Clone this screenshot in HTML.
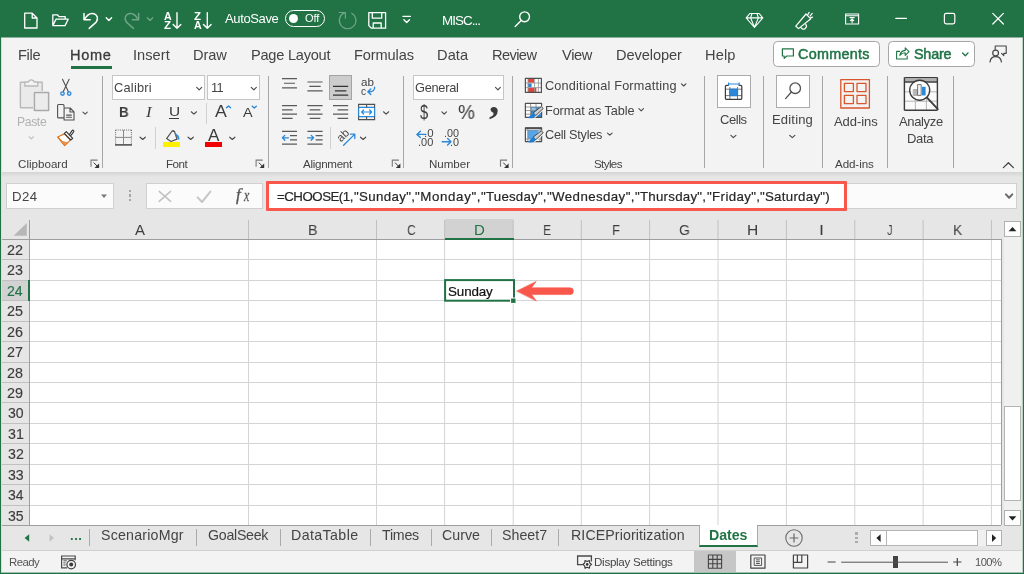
<!DOCTYPE html>
<html lang="en"><head><meta charset="utf-8"><title>Excel - CHOOSE</title>
<style>
html,body{margin:0;padding:0;}
body{width:1024px;height:574px;overflow:hidden;position:relative;background:#217346;font-family:"Liberation Sans",sans-serif;}
.b{position:absolute;}
.t{position:absolute;white-space:pre;will-change:transform;}
svg.ov{position:absolute;left:0;top:0;pointer-events:none;}
</style></head><body>
<div class="b " style="left:0px;top:0px;width:1024px;height:574px;background:#217346;"></div>
<div class="b " style="left:1px;top:37px;width:1022px;height:536px;background:#f3f3f3;"></div>
<div class="b " style="left:1px;top:37px;width:1022px;height:1px;background:#8ab39d;"></div>
<div class="b " style="left:1px;top:38px;width:1px;height:534px;background:#d4e0d9;"></div>
<div class="b " style="left:1px;top:572px;width:1022px;height:1px;background:#9fc0ae;"></div>
<div class="b " style="left:1022px;top:38px;width:1px;height:534px;background:#b9d0c3;"></div>
<div class="b " style="left:2px;top:38px;width:1020px;height:134px;background:#f3f3f3;"></div>
<div class="b " style="left:2px;top:172px;width:1020px;height:5px;background:linear-gradient(#d4d4d4,#e6e6e6);"></div>
<div class="b " style="left:2px;top:177px;width:1020px;height:373px;background:#e6e6e6;"></div>
<div class="b " style="left:2px;top:550px;width:1020px;height:22px;background:#f3f3f3;border-top:1px solid #d0d0d0;box-sizing:border-box;"></div>
<span class="t" style="left:163.73px;top:10px;font-size:10.6px;line-height:12px;color:#ffffff;transform:scaleX(1.0063);transform-origin:0 0;font-weight:700;">A</span>
<span class="t" style="left:164.11px;top:19px;font-size:10.6px;line-height:12px;color:#ffffff;transform:scaleX(1.0782);transform-origin:0 0;font-weight:700;">Z</span>
<span class="t" style="left:194.11px;top:10px;font-size:10.6px;line-height:12px;color:#ffffff;transform:scaleX(1.0782);transform-origin:0 0;font-weight:700;">Z</span>
<span class="t" style="left:193.73px;top:19px;font-size:10.6px;line-height:12px;color:#ffffff;transform:scaleX(1.0063);transform-origin:0 0;font-weight:700;">A</span>
<span class="t" style="left:224.80px;top:11px;font-size:13px;line-height:15px;color:#ffffff;letter-spacing:-0.376px;">AutoSave</span>
<div class="b " style="left:285px;top:9.8px;width:40.19999999999999px;height:17.0px;border:1.2px solid #fff;box-sizing:border-box;border-radius:9px;"></div>
<div class="b " style="left:289px;top:13.8px;width:9px;height:9.0px;background:#ffffff;border-radius:5px;"></div>
<span class="t" style="left:304.70px;top:12px;font-size:11px;line-height:12px;color:#ffffff;letter-spacing:-0.112px;">Off</span>
<span class="t" style="left:441.73px;top:13px;font-size:13.4px;line-height:15px;color:#ffffff;letter-spacing:-0.935px;">MISC...</span>
<span class="t" style="left:18.03px;top:47px;font-size:14.6px;line-height:16px;color:#444444;letter-spacing:-0.318px;">File</span>
<span class="t" style="left:133.29px;top:47px;font-size:14.6px;line-height:16px;color:#444444;letter-spacing:0.043px;">Insert</span>
<span class="t" style="left:193.03px;top:47px;font-size:14.6px;line-height:16px;color:#444444;letter-spacing:-0.108px;">Draw</span>
<span class="t" style="left:251.43px;top:47px;font-size:14.6px;line-height:16px;color:#444444;letter-spacing:-0.241px;">Page Layout</span>
<span class="t" style="left:354.23px;top:47px;font-size:14.6px;line-height:16px;color:#444444;letter-spacing:-0.115px;">Formulas</span>
<span class="t" style="left:436.83px;top:47px;font-size:14.6px;line-height:16px;color:#444444;letter-spacing:0.096px;">Data</span>
<span class="t" style="left:491.83px;top:47px;font-size:14.6px;line-height:16px;color:#444444;letter-spacing:-0.584px;">Review</span>
<span class="t" style="left:561.80px;top:47px;font-size:14.6px;line-height:16px;color:#444444;letter-spacing:-0.330px;">View</span>
<span class="t" style="left:615.63px;top:47px;font-size:14.6px;line-height:16px;color:#444444;letter-spacing:-0.074px;">Developer</span>
<span class="t" style="left:705.43px;top:47px;font-size:14.6px;line-height:16px;color:#444444;letter-spacing:0.116px;">Help</span>
<span class="t" style="left:70.43px;top:47px;font-size:14.6px;line-height:16px;color:#3a3a3a;letter-spacing:0.614px;-webkit-text-stroke:0.3px #3a3a3a;">Home</span>
<div class="b " style="left:71px;top:66px;width:41px;height:3px;background:#217346;"></div>
<div class="b " style="left:773px;top:41px;width:107px;height:25.599999999999994px;background:#fff;border:1px solid #a6a6a6;box-sizing:border-box;border-radius:4.5px;"></div>
<span class="t" style="left:798.48px;top:46px;font-size:14.4px;line-height:16px;color:#217346;letter-spacing:0.257px;-webkit-text-stroke:0.5px #217346;">Comments</span>
<div class="b " style="left:888.4px;top:41px;width:87.0px;height:25.599999999999994px;background:#fff;border:1px solid #a6a6a6;box-sizing:border-box;border-radius:4.5px;"></div>
<span class="t" style="left:913.75px;top:46px;font-size:14.4px;line-height:16px;color:#217346;letter-spacing:-0.238px;-webkit-text-stroke:0.5px #217346;">Share</span>
<div class="b " style="left:102.1px;top:75.5px;width:1.0px;height:92.30000000000001px;background:#a6a6a6;"></div>
<div class="b " style="left:268.1px;top:75.5px;width:1.0px;height:92.30000000000001px;background:#a6a6a6;"></div>
<div class="b " style="left:403.3px;top:75.5px;width:1.0px;height:92.30000000000001px;background:#a6a6a6;"></div>
<div class="b " style="left:511.8px;top:75.5px;width:0.9999999999999432px;height:92.30000000000001px;background:#a6a6a6;"></div>
<div class="b " style="left:703.9px;top:75.5px;width:1.0px;height:92.30000000000001px;background:#a6a6a6;"></div>
<div class="b " style="left:762.9px;top:75.5px;width:1.0px;height:92.30000000000001px;background:#a6a6a6;"></div>
<div class="b " style="left:821.6px;top:75.5px;width:1.0px;height:92.30000000000001px;background:#a6a6a6;"></div>
<div class="b " style="left:886.9px;top:75.5px;width:1.0px;height:92.30000000000001px;background:#a6a6a6;"></div>
<div class="b " style="left:952.9px;top:75.5px;width:1.0px;height:92.30000000000001px;background:#a6a6a6;"></div>
<span class="t" style="left:18.02px;top:158px;font-size:11.6px;line-height:12px;color:#444444;letter-spacing:0.003px;">Clipboard</span>
<span class="t" style="left:165.87px;top:158px;font-size:11.6px;line-height:12px;color:#444444;letter-spacing:-0.491px;">Font</span>
<span class="t" style="left:303.20px;top:158px;font-size:11.6px;line-height:12px;color:#444444;letter-spacing:-0.295px;">Alignment</span>
<span class="t" style="left:428.67px;top:158px;font-size:11.6px;line-height:12px;color:#444444;letter-spacing:-0.039px;">Number</span>
<span class="t" style="left:593.68px;top:158px;font-size:11.6px;line-height:12px;color:#444444;letter-spacing:-0.616px;">Styles</span>
<span class="t" style="left:835.40px;top:158px;font-size:11.6px;line-height:12px;color:#444444;letter-spacing:-0.086px;">Add-ins</span>
<span class="t" style="left:16.82px;top:115px;font-size:12.2px;line-height:14px;color:#b2b2b2;letter-spacing:-0.377px;">Paste</span>
<div class="b " style="left:112px;top:75.4px;width:93.4px;height:24.39999999999999px;background:#fff;border:1px solid #c6c6c6;box-sizing:border-box;"></div>
<span class="t" style="left:113.96px;top:80px;font-size:12.8px;line-height:15px;color:#444444;letter-spacing:0.241px;">Calibri</span>
<div class="b " style="left:207.4px;top:75.4px;width:52.20000000000002px;height:24.39999999999999px;background:#fff;border:1px solid #c6c6c6;box-sizing:border-box;"></div>
<span class="t" style="left:210.64px;top:80px;font-size:12.8px;line-height:15px;color:#444444;letter-spacing:-0.712px;">11</span>
<span class="t" style="left:119.13px;top:104px;font-size:14.2px;line-height:16px;color:#3b3b3b;transform:scaleX(0.9390);transform-origin:0 0;font-weight:700;">B</span>
<span class="t" style="left:146.20px;top:104px;font-size:14.6px;line-height:16px;color:#3b3b3b;transform:scaleX(1.1536);transform-origin:0 0;font-style:italic;font-family:'Liberation Serif',serif;">I</span>
<span class="t" style="left:168.64px;top:104px;font-size:13.6px;line-height:15px;color:#3b3b3b;transform:scaleX(1.1352);transform-origin:0 0;">U</span>
<div class="b " style="left:169.4px;top:117.8px;width:9.599999999999994px;height:1.2000000000000028px;background:#3b3b3b;"></div>
<div class="b " style="left:206.3px;top:102.6px;width:1.0px;height:21.400000000000006px;background:#d0d0d0;"></div>
<span class="t" style="left:215.20px;top:101px;font-size:17.4px;line-height:20px;color:#3b3b3b;transform:scaleX(1.0198);transform-origin:0 0;">A</span>
<span class="t" style="left:242.80px;top:105px;font-size:13px;line-height:15px;color:#3b3b3b;transform:scaleX(1.1105);transform-origin:0 0;">A</span>
<div class="b " style="left:155.1px;top:127px;width:1.0px;height:22px;background:#d0d0d0;"></div>
<div class="b " style="left:162.8px;top:142.4px;width:17.399999999999977px;height:4.400000000000006px;background:#ffef00;"></div>
<span class="t" style="left:208.40px;top:127px;font-size:15.6px;line-height:17px;color:#3b3b3b;transform:scaleX(1.0989);transform-origin:0 0;">A</span>
<div class="b " style="left:204.8px;top:142.4px;width:17.19999999999999px;height:4.400000000000006px;background:#f00000;"></div>
<div class="b " style="left:329px;top:75px;width:23px;height:25px;background:#cdcdcd;border:1px solid #a4a4a4;box-sizing:border-box;"></div>
<span class="t" style="left:360.73px;top:76px;font-size:10.6px;line-height:12px;color:#444444;transform:scaleX(1.0991);transform-origin:0 0;">ab</span>
<span class="t" style="left:361.20px;top:86px;font-size:10px;line-height:11px;color:#444444;transform:scaleX(1.0115);transform-origin:0 0;">c</span>
<div class="b " style="left:330.0px;top:127px;width:1.0px;height:22px;background:#d0d0d0;"></div>
<div class="b " style="left:413.2px;top:75.4px;width:90.80000000000001px;height:24.39999999999999px;background:#fff;border:1px solid #c6c6c6;box-sizing:border-box;"></div>
<span class="t" style="left:415.16px;top:80px;font-size:12.8px;line-height:15px;color:#444444;letter-spacing:-0.283px;">General</span>
<span class="t" style="left:420.45px;top:100px;font-size:20.6px;line-height:23px;color:#3b3b3b;transform:scaleX(0.7077);transform-origin:0 0;">$</span>
<span class="t" style="left:458.13px;top:101px;font-size:19.8px;line-height:22px;color:#3b3b3b;transform:scaleX(0.9608);transform-origin:0 0;">%</span>
<span class="t" style="left:488.59px;top:77px;font-size:40px;line-height:45px;color:#3b3b3b;transform:scaleX(1.0244);transform-origin:0 0;font-weight:700;font-family:'Liberation Serif',serif;">,</span>
<span class="t" style="left:423.97px;top:127px;font-size:10.8px;line-height:12px;color:#444444;transform:scaleX(1.0563);transform-origin:0 0;">.0</span>
<span class="t" style="left:418.21px;top:136px;font-size:10.8px;line-height:12px;color:#444444;transform:scaleX(1.0174);transform-origin:0 0;">.00</span>
<span class="t" style="left:443.63px;top:127px;font-size:10.8px;line-height:12px;color:#444444;transform:scaleX(0.9955);transform-origin:0 0;">.00</span>
<span class="t" style="left:449.52px;top:136px;font-size:10.8px;line-height:12px;color:#444444;transform:scaleX(1.0042);transform-origin:0 0;">.0</span>
<span class="t" style="left:545.16px;top:79px;font-size:12.7px;line-height:14px;color:#444444;letter-spacing:0.183px;">Conditional Formatting</span>
<span class="t" style="left:544.78px;top:104px;font-size:12.7px;line-height:14px;color:#444444;letter-spacing:-0.092px;">Format as Table</span>
<span class="t" style="left:545.16px;top:128px;font-size:12.7px;line-height:14px;color:#444444;letter-spacing:-0.253px;">Cell Styles</span>
<div class="b " style="left:717px;top:75px;width:34px;height:33px;background:#fff;border:1px solid #ababab;box-sizing:border-box;"></div>
<span class="t" style="left:719.95px;top:112px;font-size:13px;line-height:15px;color:#444444;letter-spacing:-0.455px;">Cells</span>
<div class="b " style="left:776px;top:75px;width:34px;height:33px;background:#fff;border:1px solid #ababab;box-sizing:border-box;"></div>
<span class="t" style="left:771.76px;top:112px;font-size:13px;line-height:15px;color:#444444;letter-spacing:0.184px;">Editing</span>
<span class="t" style="left:833.60px;top:114px;font-size:13px;line-height:15px;color:#444444;letter-spacing:-0.069px;">Add-ins</span>
<span class="t" style="left:898.80px;top:114px;font-size:13px;line-height:15px;color:#444444;letter-spacing:-0.349px;">Analyze</span>
<span class="t" style="left:906.96px;top:131px;font-size:13px;line-height:15px;color:#444444;letter-spacing:-0.352px;">Data</span>
<div class="b " style="left:6px;top:183px;width:108px;height:26px;background:#fbfbfb;border:1px solid #d0d0d0;box-sizing:border-box;"></div>
<span class="t" style="left:11.74px;top:189px;font-size:13.2px;line-height:15px;color:#444;letter-spacing:0.482px;">D24</span>
<div class="b " style="left:128.7px;top:190px;width:2.4000000000000057px;height:2.4000000000000057px;background:#a6a6a6;"></div>
<div class="b " style="left:128.7px;top:194.3px;width:2.4000000000000057px;height:2.4000000000000057px;background:#a6a6a6;"></div>
<div class="b " style="left:128.7px;top:198.6px;width:2.4000000000000057px;height:2.4000000000000057px;background:#a6a6a6;"></div>
<div class="b " style="left:146px;top:183px;width:117px;height:26px;background:#fbfbfb;border:1px solid #d0d0d0;box-sizing:border-box;"></div>
<span class="t" style="left:236.23px;top:185px;font-size:17px;line-height:19px;color:#555;font-style:italic;-webkit-text-stroke:0.35px #555;font-family:'Liberation Serif',serif;">f</span>
<span class="t" style="left:243.60px;top:186px;font-size:17px;line-height:19px;color:#555;transform:scaleX(0.6981);transform-origin:0 0;font-style:italic;-webkit-text-stroke:0.3px #555;font-family:'Liberation Serif',serif;">x</span>
<div class="b " style="left:268px;top:183px;width:749px;height:26px;background:#fbfbfb;border:1px solid #d0d0d0;box-sizing:border-box;"></div>
<div class="b " style="left:266px;top:181px;width:581px;height:30px;background:#fff;border:3px solid #f7584b;box-sizing:border-box;border-radius:1px;"></div>
<div class="b" style="left:0;top:0"><span class="t" style="left:277.20px;top:189px;font-size:13.3px;line-height:15px;color:#262626;letter-spacing:-0.504px;-webkit-text-stroke:0.2px #262626;">=CHOOSE(1,</span><span class="t" style="left:353.87px;top:189px;font-size:13.3px;line-height:15px;color:#262626;letter-spacing:0.334px;-webkit-text-stroke:0.2px #262626;">"Sunday",</span><span class="t" style="left:414.77px;top:189px;font-size:13.3px;line-height:15px;color:#262626;letter-spacing:0.627px;-webkit-text-stroke:0.2px #262626;">"Monday",</span><span class="t" style="left:481.07px;top:189px;font-size:13.3px;line-height:15px;color:#262626;letter-spacing:0.214px;-webkit-text-stroke:0.2px #262626;">"Tuesday",</span><span class="t" style="left:547.07px;top:189px;font-size:13.3px;line-height:15px;color:#262626;letter-spacing:0.394px;-webkit-text-stroke:0.2px #262626;">"Wednesday",</span><span class="t" style="left:635.17px;top:189px;font-size:13.3px;line-height:15px;color:#262626;letter-spacing:0.240px;-webkit-text-stroke:0.2px #262626;">"Thursday",</span><span class="t" style="left:706.87px;top:189px;font-size:13.3px;line-height:15px;color:#262626;letter-spacing:0.373px;-webkit-text-stroke:0.2px #262626;">"Friday",</span><span class="t" style="left:760.17px;top:189px;font-size:13.3px;line-height:15px;color:#262626;letter-spacing:0.266px;-webkit-text-stroke:0.2px #262626;">"Saturday")</span></div>
<div class="b " style="left:30px;top:239px;width:971px;height:286px;background:#fff;"></div>
<div class="b " style="left:2px;top:219px;width:999px;height:20px;background:#e6e6e6;"></div>
<div class="b " style="left:445px;top:219px;width:68px;height:20px;background:#d2d2d2;"></div>
<div class="b " style="left:2px;top:281px;width:27px;height:19px;background:#d2d2d2;"></div>
<span class="t" style="left:134.60px;top:221px;font-size:15px;line-height:17px;color:#3d3d3d;transform:scaleX(0.9825);transform-origin:0 0;">A</span>
<span class="t" style="left:308.06px;top:221px;font-size:15px;line-height:17px;color:#3d3d3d;transform:scaleX(0.9470);transform-origin:0 0;">B</span>
<span class="t" style="left:406.54px;top:221px;font-size:15px;line-height:17px;color:#3d3d3d;transform:scaleX(0.8189);transform-origin:0 0;">C</span>
<span class="t" style="left:473.82px;top:221px;font-size:15px;line-height:17px;color:#217346;transform:scaleX(0.9860);transform-origin:0 0;">D</span>
<span class="t" style="left:543.48px;top:221px;font-size:15px;line-height:17px;color:#3d3d3d;transform:scaleX(0.8073);transform-origin:0 0;">E</span>
<span class="t" style="left:611.72px;top:221px;font-size:15px;line-height:17px;color:#3d3d3d;transform:scaleX(0.8620);transform-origin:0 0;">F</span>
<span class="t" style="left:679.00px;top:221px;font-size:15px;line-height:17px;color:#3d3d3d;transform:scaleX(0.9364);transform-origin:0 0;">G</span>
<span class="t" style="left:747.05px;top:221px;font-size:15px;line-height:17px;color:#3d3d3d;transform:scaleX(1.0383);transform-origin:0 0;">H</span>
<span class="t" style="left:818.58px;top:221px;font-size:15px;line-height:17px;color:#3d3d3d;transform:scaleX(1.2000);transform-origin:0 0;">I</span>
<span class="t" style="left:886.98px;top:221px;font-size:15px;line-height:17px;color:#3d3d3d;transform:scaleX(0.7390);transform-origin:0 0;">J</span>
<span class="t" style="left:952.65px;top:221px;font-size:15px;line-height:17px;color:#3d3d3d;transform:scaleX(0.9195);transform-origin:0 0;">K</span>
<span class="t" style="left:7.28px;top:242px;font-size:14px;line-height:16px;color:#3d3d3d;transform:scaleX(1.0274);transform-origin:0 0;-webkit-text-stroke:0.15px #3d3d3d;">22</span>
<span class="t" style="left:7.28px;top:262px;font-size:14px;line-height:16px;color:#3d3d3d;transform:scaleX(1.0224);transform-origin:0 0;-webkit-text-stroke:0.15px #3d3d3d;">23</span>
<span class="t" style="left:7.29px;top:283px;font-size:14px;line-height:16px;color:#217346;transform:scaleX(1.0076);transform-origin:0 0;-webkit-text-stroke:0.15px #217346;">24</span>
<span class="t" style="left:7.28px;top:303px;font-size:14px;line-height:16px;color:#3d3d3d;transform:scaleX(1.0224);transform-origin:0 0;-webkit-text-stroke:0.15px #3d3d3d;">25</span>
<span class="t" style="left:7.28px;top:324px;font-size:14px;line-height:16px;color:#3d3d3d;transform:scaleX(1.0224);transform-origin:0 0;-webkit-text-stroke:0.15px #3d3d3d;">26</span>
<span class="t" style="left:7.28px;top:344px;font-size:14px;line-height:16px;color:#3d3d3d;transform:scaleX(1.0274);transform-origin:0 0;-webkit-text-stroke:0.15px #3d3d3d;">27</span>
<span class="t" style="left:7.28px;top:365px;font-size:14px;line-height:16px;color:#3d3d3d;transform:scaleX(1.0224);transform-origin:0 0;-webkit-text-stroke:0.15px #3d3d3d;">28</span>
<span class="t" style="left:7.28px;top:385px;font-size:14px;line-height:16px;color:#3d3d3d;transform:scaleX(1.0274);transform-origin:0 0;-webkit-text-stroke:0.15px #3d3d3d;">29</span>
<span class="t" style="left:7.51px;top:405px;font-size:14px;line-height:16px;color:#3d3d3d;transform:scaleX(1.0027);transform-origin:0 0;-webkit-text-stroke:0.15px #3d3d3d;">30</span>
<span class="t" style="left:7.50px;top:426px;font-size:14px;line-height:16px;color:#3d3d3d;transform:scaleX(1.0125);transform-origin:0 0;-webkit-text-stroke:0.15px #3d3d3d;">31</span>
<span class="t" style="left:7.50px;top:446px;font-size:14px;line-height:16px;color:#3d3d3d;transform:scaleX(1.0125);transform-origin:0 0;-webkit-text-stroke:0.15px #3d3d3d;">32</span>
<span class="t" style="left:7.51px;top:467px;font-size:14px;line-height:16px;color:#3d3d3d;transform:scaleX(1.0076);transform-origin:0 0;-webkit-text-stroke:0.15px #3d3d3d;">33</span>
<span class="t" style="left:7.51px;top:487px;font-size:14px;line-height:16px;color:#3d3d3d;transform:scaleX(0.9932);transform-origin:0 0;-webkit-text-stroke:0.15px #3d3d3d;">34</span>
<span class="t" style="left:7.51px;top:508px;font-size:14px;line-height:16px;color:#3d3d3d;transform:scaleX(1.0076);transform-origin:0 0;-webkit-text-stroke:0.15px #3d3d3d;">35</span>
<div class="b" style="left:446px;top:281px;width:67px;height:19px;z-index:2"><span class="t" style="left:1.80px;top:3px;font-size:13.4px;line-height:15px;color:#111;letter-spacing:-0.125px;-webkit-text-stroke:0.2px #111;">Sunday</span></div>
<div class="b " style="left:1004px;top:237px;width:17px;height:273px;background:#f0f0f0;"></div>
<div class="b " style="left:1004px;top:221px;width:17px;height:16px;background:#fdfdfd;border:1px solid #b0b0b0;box-sizing:border-box;"></div>
<div class="b " style="left:1004px;top:510px;width:17px;height:16px;background:#fdfdfd;border:1px solid #b0b0b0;box-sizing:border-box;"></div>
<div class="b " style="left:1004px;top:406px;width:17px;height:95px;background:#fff;border:1px solid #b4b4b4;box-sizing:border-box;"></div>
<span class="t" style="left:69.95px;top:528px;font-size:13px;line-height:15px;color:#217346;letter-spacing:0.550px;font-weight:700;">...</span>
<div class="b " style="left:89px;top:529px;width:1px;height:17px;background:#ababab;"></div>
<div class="b " style="left:196px;top:529px;width:1px;height:17px;background:#ababab;"></div>
<div class="b " style="left:280px;top:529px;width:1px;height:17px;background:#ababab;"></div>
<div class="b " style="left:370px;top:529px;width:1px;height:17px;background:#ababab;"></div>
<div class="b " style="left:431px;top:529px;width:1px;height:17px;background:#ababab;"></div>
<div class="b " style="left:491px;top:529px;width:1px;height:17px;background:#ababab;"></div>
<div class="b " style="left:558px;top:529px;width:1px;height:17px;background:#ababab;"></div>
<span class="t" style="left:101.16px;top:527px;font-size:14.2px;line-height:16px;color:#444;letter-spacing:0.214px;">ScenarioMgr</span>
<span class="t" style="left:207.89px;top:527px;font-size:14.2px;line-height:16px;color:#444;letter-spacing:-0.271px;">GoalSeek</span>
<span class="t" style="left:291.06px;top:527px;font-size:14.2px;line-height:16px;color:#444;letter-spacing:0.401px;">DataTable</span>
<span class="t" style="left:381.72px;top:527px;font-size:14.2px;line-height:16px;color:#444;letter-spacing:-0.237px;">Times</span>
<span class="t" style="left:442.09px;top:527px;font-size:14.2px;line-height:16px;color:#444;letter-spacing:0.009px;">Curve</span>
<span class="t" style="left:501.56px;top:527px;font-size:14.2px;line-height:16px;color:#444;letter-spacing:0.013px;">Sheet7</span>
<span class="t" style="left:570.66px;top:527px;font-size:14.2px;line-height:16px;color:#444;letter-spacing:0.103px;">RICEPrioritization</span>
<div class="b " style="left:699px;top:525px;width:59px;height:22px;background:#fff;border-bottom:2px solid #217346;border-left:1px solid #ababab;border-right:1px solid #ababab;box-sizing:border-box;"></div>
<span class="t" style="left:709.28px;top:527px;font-size:14.2px;line-height:16px;color:#217346;letter-spacing:-0.069px;font-weight:700;">Dates</span>
<div class="b " style="left:855.4px;top:532.4px;width:2.300000000000068px;height:2.2999999999999545px;background:#ababab;"></div>
<div class="b " style="left:855.4px;top:536.7px;width:2.300000000000068px;height:2.2999999999999545px;background:#ababab;"></div>
<div class="b " style="left:855.4px;top:541px;width:2.300000000000068px;height:2.2999999999999545px;background:#ababab;"></div>
<div class="b " style="left:887px;top:530px;width:99px;height:16px;background:#f0f0f0;"></div>
<div class="b " style="left:870px;top:530px;width:17px;height:16px;background:#fdfdfd;border:1px solid #b0b0b0;box-sizing:border-box;"></div>
<div class="b " style="left:886px;top:530px;width:92px;height:16px;background:#fff;border:1px solid #b4b4b4;box-sizing:border-box;"></div>
<div class="b " style="left:986px;top:530px;width:16px;height:16px;background:#fdfdfd;border:1px solid #b0b0b0;box-sizing:border-box;"></div>
<span class="t" style="left:8.89px;top:556px;font-size:11.4px;line-height:12px;color:#555;letter-spacing:-0.558px;">Ready</span>
<span class="t" style="left:594.27px;top:556px;font-size:11.6px;line-height:12px;color:#444;letter-spacing:-0.283px;">Display Settings</span>
<div class="b " style="left:694px;top:551px;width:42px;height:21px;background:#c6c6c6;"></div>
<div class="b " style="left:893px;top:556px;width:5px;height:12px;background:#444;"></div>
<span class="t" style="left:975.16px;top:556px;font-size:11.2px;line-height:12px;color:#555;letter-spacing:-0.547px;">100%</span>
<svg class="ov" width="1024" height="574" viewBox="0 0 1024 574" fill="none" stroke-linecap="round" stroke-linejoin="round">
<path d="M24.7 13.2h7.5l4.8 4.8v10h-12.3z M32.2 13.2v4.8h4.8" stroke="#ffffff" stroke-width="1.3"/>
<path d="M52.8 25.3v-10.5h4.6l1.6 1.8h6.2v2.6 M52.8 25.6l3.2-6.4h12.2l-3.2 6.4z" stroke="#ffffff" stroke-width="1.3"/>
<path d="M84 13.6v6.2h6.2 M84.4 19.5c2.5-4.5 6.3-6.8 9.6-5.8c3.4 1 4.6 5 2.2 8.4l-7 6.3" stroke="#ffffff" stroke-width="1.5"/>
<path d="M106.2 17.8l2.7 2.7l2.7-2.7" stroke="#ffffff" stroke-width="1.4"/>
<path d="M138.6 13.6v6.2h-6.2 M138.2 19.5c-2.5-4.5-6.3-6.8-9.6-5.8c-3.4 1-4.6 5-2.2 8.4l7 6.3" stroke="#6fa487" stroke-width="1.5"/>
<path d="M147.3 17.8l2.7 2.7l2.7-2.7" stroke="#6fa487" stroke-width="1.4"/>
<path d="M177 12.8v15.4 M173.2 24.4l3.8 3.9l3.8-3.9" stroke="#ffffff" stroke-width="1.4"/>
<path d="M207.3 12.8v15.4 M203.5 24.4l3.8 3.9l3.8-3.9" stroke="#ffffff" stroke-width="1.4"/>
<path d="M351.7 13.2A8.3 8.3 0 1 1 345 12.6 M339.2 12.5H345.4V18.2" stroke="#6fa487" stroke-width="1.2"/>
<path d="M368.8 12.6h16.8v15.6h-14.2l-2.6-2.6z M372.3 12.6v5.6h9.4v-5.6 M373.2 28.2v-5.2h8v5.2" stroke="#ffffff" stroke-width="1.3"/>
<path d="M403 16.4h7.4" stroke="#ffffff" stroke-width="1.3"/> <path d="M403.9 19.8l2.8 2.7l2.8-2.7" stroke="#ffffff" stroke-width="1.4"/>
<circle cx="524.6" cy="16.8" r="4.9" stroke="#ffffff" stroke-width="1.4"/><path d="M521.2 20.4l-6 6" stroke="#ffffff" stroke-width="1.4"/>
<path d="M749.8 13.5h9.4l3.6 4.4l-8.3 9.6l-8.3-9.6z M746.4 17.9h16.2 M752 13.5l-1.4 4.4l3.9 9.4 M757 13.5l1.4 4.4l-3.9 9.4" stroke="#ffffff" stroke-width="1.1"/>
<path d="M795.8 26.2L806 14l4.8 4.8l-12.2 9.8z M801.2 27.8a2.6 2.6 0 0 0 4.6-3.4 M808 14.4l1.2-2 M810.2 15.8l2-2.4 M810.8 17.6l1.8-0.4" stroke="#ffffff" stroke-width="1.2"/>
<path d="M845.6 14h13v10h-13z M845.6 15.8h13 M850 17.6h4.2 M852.1 22.6v-3.4 M850.5 20.6l1.6-1.6l1.6 1.6" stroke="#ffffff" stroke-width="1.1"/>
<path d="M895.8 18.4h10.6" stroke="#ffffff" stroke-width="1.2"/>
<rect x="944.4" y="13.4" width="10.4" height="10.4" rx="1.8" stroke="#ffffff" stroke-width="1.2"/>
<path d="M992.8 13.4l10.6 10.6 M1003.4 13.4l-10.6 10.6" stroke="#ffffff" stroke-width="1.2"/>
<path d="M782.4 48.800h11v7.200h-6.600l-2.600 2.400v-2.400h-1.800z" stroke="#217346" stroke-width="1.2"/>
<path d="M899.6 51.4h-3v7.6h10.6v-3 M899.8 55.4c0.6-3.2 2.6-4.8 5.4-5v-2.6l3.8 3.8l-3.8 3.8v-2.6c-2.4 0-4 0.8-5.4 2.6z" stroke="#217346" stroke-width="1.1"/>
<path d="M962.600 53l2.700 2.700l2.700-2.700" stroke="#217346" stroke-width="1.3"/>
<path d="M995.200 49.400v-3.400h11v7.400h-2.400v2.200l-2.200-2.200" stroke="#444" stroke-width="1.1"/><circle cx="995.600" cy="53" r="2.900" stroke="#444" stroke-width="1.2"/><path d="M990 62c0.400-3.600 2.800-5.400 5.700-5.400s5.300 1.800 5.700 5.400" stroke="#444" stroke-width="1.2"/>
<path d="M91.0 166.8v-6.700h6.600" stroke="#7a7a7a" stroke-width="1.100" stroke-linecap="butt" stroke-linejoin="miter"/><path d="M93.7 162.6l4.200 4.200" stroke="#333" stroke-width="1" stroke-linecap="butt"/><path d="M99.1 163.4v4.600h-4.600z" fill="#333" stroke="none"/>
<path d="M256.1 166.8v-6.700h6.600" stroke="#7a7a7a" stroke-width="1.100" stroke-linecap="butt" stroke-linejoin="miter"/><path d="M258.8 162.6l4.200 4.200" stroke="#333" stroke-width="1" stroke-linecap="butt"/><path d="M264.2 163.4v4.600h-4.600z" fill="#333" stroke="none"/>
<path d="M392.3 166.8v-6.700h6.600" stroke="#7a7a7a" stroke-width="1.100" stroke-linecap="butt" stroke-linejoin="miter"/><path d="M395.0 162.6l4.200 4.200" stroke="#333" stroke-width="1" stroke-linecap="butt"/><path d="M400.4 163.4v4.600h-4.600z" fill="#333" stroke="none"/>
<path d="M500.5 166.8v-6.700h6.600" stroke="#7a7a7a" stroke-width="1.100" stroke-linecap="butt" stroke-linejoin="miter"/><path d="M503.2 162.6l4.200 4.200" stroke="#333" stroke-width="1" stroke-linecap="butt"/><path d="M508.6 163.4v4.600h-4.600z" fill="#333" stroke="none"/>
<path d="M1003.4 167.6L1008.4 162.8L1013.4 167.6" stroke="#444" stroke-width="1.3"/>
<path d="M20.400 82.200h21.800v25.600h-21.800z" stroke="#b9b9b9" stroke-width="1.4" fill="#eaeaea"/><path d="M24.800 86v-3.800h3.600a3 3 0 0 1 5.800 0h3.600v3.800z" stroke="#b9b9b9" stroke-width="1.3" fill="#f3f3f3"/>
<rect x="33" y="91" width="17" height="20.800" fill="#f3f3f3" stroke="none"/><rect x="34.4" y="92.4" width="14.2" height="18" fill="#ececec" stroke="#a9a9a9" stroke-width="1.5"/>
<path d="M29.3 136.8L31.3 138.9L33.3 136.8" stroke="#bdbdbd" stroke-width="1.2"/>
<path d="M62.5 79.2l5.900 12.600 M69.100 79.200l-5.900 12.600" stroke="#505050" stroke-width="1.1"/><circle cx="62.5" cy="93.6" r="1.7" stroke="#2b88d8" stroke-width="1.4"/><circle cx="69.2" cy="93.6" r="1.7" stroke="#2b88d8" stroke-width="1.4"/>
<path d="M63.4 117.900h-4.800a1 1 0 0 1 -1-1v-11.400a1 1 0 0 1 1-1h4.400a1 1 0 0 1 1 1v1.600 M64.100 108h6.100l3.800 3.800v8.200h-9.900z M70 108.200v3.800h3.800 M66.600 115.100h4.800 M66.600 117.300h4.800" stroke="#505050" stroke-width="1.1"/>
<path d="M82.9 112.1L85.1 114.1L87.3 112.1" stroke="#505050" stroke-width="1.1"/>
<path d="M64.200 133.900l-6.500 3.100l7 8.600l5.800-5.700z" fill="#fff" stroke="#e3731f" stroke-width="1.200"/><path d="M58 137.300l6.600 8l2.600-2.600l-4.600-1.200z" fill="#ef9a55" stroke="#e3731f" stroke-width="0.700"/><path d="M70.600 134.400l2.300-3.200" stroke="#333" stroke-width="3" stroke-linecap="round"/><path d="M70.600 134.400l2.300-3.200" stroke="#f3f3f3" stroke-width="1" stroke-linecap="round"/><path d="M64.300 133.300l2-1.700l6.400 6.700l-2 1.700z" fill="#f6f6f6" stroke="#333" stroke-width="1.100"/>
<path d="M196.7 87.4L199.2 89.9L201.7 87.4" stroke="#4a4a4a" stroke-width="1.15"/>
<path d="M251.3 87.4L253.8 89.9L256.3 87.4" stroke="#4a4a4a" stroke-width="1.15"/>
<path d="M191.3 111.8L193.9 114.1L196.5 111.8" stroke="#4a4a4a" stroke-width="1.15"/>
<path d="M226.5 107.8L228.5 105.9L230.5 107.8" stroke="#2b88d8" stroke-width="1.4"/>
<path d="M252.3 106.2L254.3 108.1L256.3 106.2" stroke="#2b88d8" stroke-width="1.4"/>
<path d="M115.6 130H131.400 M115.6 130V144 M131.400 130V144" stroke="#666" stroke-width="1" stroke-dasharray="1 1.100" stroke-linecap="butt"/><path d="M123.500 130V144.400 M115.600 137.400H131.400" stroke="#8a8a8a" stroke-width="1" stroke-linecap="butt"/><path d="M115 144.900H132" stroke="#3b3b3b" stroke-width="1.4" stroke-linecap="butt"/>
<path d="M140.1 137.2L142.7 139.5L145.3 137.2" stroke="#4a4a4a" stroke-width="1.15"/>
<path d="M166.600 138.600l5.500-7.600l2.500 0.700l2.400 7.400l-6 2.400z M172.100 131a1.700 1.700 0 0 1 2.500 0.700" stroke="#505050" stroke-width="1.200"/><path d="M175.400 134.200c2 0.800 3.200 2.600 3.200 5.400" stroke="#2b88d8" stroke-width="1.700" stroke-linecap="butt"/>
<path d="M188.1 137.2L190.7 139.5L193.3 137.2" stroke="#4a4a4a" stroke-width="1.15"/>
<path d="M229.7 137.2L232.3 139.5L234.9 137.2" stroke="#4a4a4a" stroke-width="1.15"/>
<path d="M282.0 78.6H297.0M284.0 83.2H295.0M282.0 87.8H297.0" stroke="#5a5a5a" stroke-width="1.15" stroke-linecap="butt"/>
<path d="M307.4 82.0H322.6M309.3 86.4H320.7M307.4 90.8H322.6" stroke="#5a5a5a" stroke-width="1.15" stroke-linecap="butt"/>
<path d="M333.0 86.4H348.2M334.9 90.8H346.3M333.0 95.2H348.2" stroke="#333" stroke-width="1.3" stroke-linecap="butt"/>
<path d="M374.600 87.200c0.400 3.200-2 4.800-6.400 4.600 M370.800 88.900l-3 2.900l3 2.700" stroke="#2b88d8" stroke-width="1.400"/>
<path d="M282.0 105.6H297.0M282.0 109.8H292.6M282.0 114.1H297.0M282.0 118.3H292.6" stroke="#5a5a5a" stroke-width="1.15" stroke-linecap="butt"/>
<path d="M307.4 105.6H322.6M309.7 109.8H320.3M307.4 114.1H322.6M309.7 118.3H320.3" stroke="#5a5a5a" stroke-width="1.15" stroke-linecap="butt"/>
<path d="M333.0 105.6H348.2M337.6 109.8H348.2M333.0 114.1H348.2M337.6 118.3H348.2" stroke="#5a5a5a" stroke-width="1.15" stroke-linecap="butt"/>
<rect x="358.600" y="107.400" width="16" height="9.200" fill="#fff" stroke="#2b88d8" stroke-width="1.300"/><path d="M358.600 104.600v2.800 M366.600 104.600v2.800 M374.600 104.600v2.800 M358.600 116.600v2.800 M366.600 116.600v2.800 M374.600 116.600v2.800 M358 104.400h17.200 M358 119.600h17.200" stroke="#505050" stroke-width="1.1" stroke-linecap="butt"/><path d="M361.600 112h10 M363.600 110l-2 2l2 2 M369.600 110l2 2l-2 2" stroke="#2b88d8" stroke-width="1.200"/>
<path d="M383.5 111.8L386.1 114.1L388.7 111.8" stroke="#4a4a4a" stroke-width="1.15"/>
<path d="M282.0 131.4H297.0M290.0 135.6H297.0M290.0 139.9H297.0M282.0 144.1H297.0" stroke="#5a5a5a" stroke-width="1.15" stroke-linecap="butt"/>
<path d="M282.400 137.800h6 M284.800 135.400l-2.400 2.400l2.400 2.400" stroke="#2b88d8" stroke-width="1.300"/>
<path d="M307.4 131.4H322.6M315.6 135.6H322.6M315.6 139.9H322.6M307.4 144.1H322.6" stroke="#5a5a5a" stroke-width="1.15" stroke-linecap="butt"/>
<path d="M307.600 137.800h6 M311.200 135.400l2.400 2.400l-2.400 2.400" stroke="#2b88d8" stroke-width="1.300"/>
<text x="341" y="142.600" transform="rotate(-45 341 142.600)" font-family="Liberation Sans,sans-serif" font-size="11.400" fill="#444444" stroke="none">ab</text>
<path d="M343.600 145.200l11-10.800 M350.400 134.200h4.400v4.400" stroke="#2b88d8" stroke-width="1.300"/>
<path d="M360.5 137.2L363.1 139.5L365.7 137.2" stroke="#4a4a4a" stroke-width="1.15"/>
<path d="M495.5 87.4L497.9 89.9L500.3 87.4" stroke="#4a4a4a" stroke-width="1.15"/>
<path d="M441.9 111.8L444.2 114.1L446.5 111.8" stroke="#4a4a4a" stroke-width="1.15"/>
<path d="M416.800 134.400h9 M420.400 131.200l-3.400 3.200l3.400 3.200" stroke="#2b88d8" stroke-width="1.400"/>
<path d="M442.200 141.800h8.600 M447.600 138.600l3.400 3.200l-3.400 3.200" stroke="#2b88d8" stroke-width="1.400"/>
<rect x="525.400" y="78.400" width="16" height="14" fill="#fff" stroke="none"/><rect x="528" y="78.600" width="6" height="4.200" fill="#e8413a" stroke="none"/><rect x="528" y="83.400" width="3.600" height="3.800" fill="#2b88d8" stroke="none"/><rect x="528" y="87.800" width="8.400" height="4.400" fill="#e8413a" stroke="none"/><path d="M525.400 83h16 M525.400 87.600h16 M528 78.400v14 M534.600 78.400v14 M538.400 78.400v14" stroke="#9a9a9a" stroke-width="0.900" stroke-linecap="butt"/><rect x="525.400" y="78.400" width="16" height="14" stroke="#505050" stroke-width="1.200"/>
<path d="M681.5 83.9L683.7 86.0L685.9 83.9" stroke="#4a4a4a" stroke-width="1.15"/>
<rect x="525.400" y="103.400" width="16.200" height="14" fill="#fff" stroke="none"/><rect x="530.600" y="107" width="11" height="10.400" fill="#2b88d8" stroke="none"/><rect x="531.400" y="107.600" width="4.600" height="3" fill="#8cc4f2" stroke="none"/><path d="M525.400 107h16.200 M525.400 110.600h16.200 M525.400 114.200h16.200 M530.600 103.400v14 M536 103.400v14" stroke="#8a8a8a" stroke-width="0.900" stroke-linecap="butt"/><rect x="525.400" y="103.400" width="16.200" height="14" stroke="#505050" stroke-width="1.200"/><path d="M543 107.6l-9.600 8.800" stroke="#f3f3f3" stroke-width="4.600" stroke-linecap="butt"/><path d="M541.700 106.9l1.500 1.700l-7.500 6.900l-2.300-2.300z" fill="#cfcfcf" stroke="#3b3b3b" stroke-width="0.900"/><path d="M533.500 113.4c-2.600 0.200-2.300 2.900-5.500 4.200c3 1 6.600 0.200 7.700-2.100z" fill="#1e7fd6" stroke="#1e7fd6" stroke-width="0.500"/>
<path d="M638.9 108.7L641.2 110.8L643.5 108.7" stroke="#4a4a4a" stroke-width="1.15"/>
<rect x="525.400" y="127.800" width="16.200" height="13.800" fill="#fff" stroke="none"/><rect x="527.800" y="130" width="10.800" height="9" fill="#55a5ea" stroke="none"/><path d="M525.400 130h16.200 M525.400 139h16.200 M527.800 127.800v13.800 M540 127.800v13.800" stroke="#8a8a8a" stroke-width="0.900" stroke-linecap="butt"/><rect x="525.400" y="127.800" width="16.200" height="13.800" stroke="#505050" stroke-width="1.200"/><path d="M525.400 128.200h16.200" stroke="#505050" stroke-width="1.600" stroke-linecap="butt"/><path d="M543 131.8l-9.600 8.800" stroke="#f3f3f3" stroke-width="4.600" stroke-linecap="butt"/><path d="M541.700 131.1l1.500 1.700l-7.500 6.900l-2.300-2.300z" fill="#cfcfcf" stroke="#3b3b3b" stroke-width="0.900"/><path d="M533.500 137.6c-2.600 0.200-2.300 2.900-5.500 4.200c3 1 6.600 0.200 7.700-2.100z" fill="#1e7fd6" stroke="#1e7fd6" stroke-width="0.500"/>
<path d="M607.5 133.1L609.8 135.2L612.1 133.1" stroke="#4a4a4a" stroke-width="1.15"/>
<path d="M725.400 89.200h16.400 M725.400 95.600h16.400 M729.900 87v12.400 M737.500 87v12.400" stroke="#777" stroke-width="1" stroke-linecap="butt"/><rect x="729.900" y="89" width="7.800" height="6.800" fill="#2b88d8" stroke="#1e7fd6" stroke-width="0.800"/><path d="M728.800 85.400h-2.200a1.200 1.200 0 0 0 -1.200 1.200v11.600a1.200 1.200 0 0 0 1.200 1.200h14a1.200 1.200 0 0 0 1.200-1.200v-11.600a1.200 1.200 0 0 0 -1.200-1.200h-2" stroke="#3b3b3b" stroke-width="1.200" stroke-linecap="butt"/><path d="M728.600 84h10.600 M728.600 82.600v2.800 M739.200 82.600v2.800" stroke="#2b88d8" stroke-width="1.200" stroke-linecap="butt"/>
<path d="M730.9 135.3L733.4 137.7L735.9 135.3" stroke="#4a4a4a" stroke-width="1.15"/>
<circle cx="795.200" cy="88.200" r="5.300" stroke="#505050" stroke-width="1.300"/><path d="M791.400 92l-5.800 6.600" stroke="#505050" stroke-width="1.300"/>
<path d="M789.7 135.3L792.3 137.7L794.9 135.3" stroke="#4a4a4a" stroke-width="1.15"/>
<rect x="840.800" y="79.600" width="28.600" height="28.400" stroke="#d9562b" stroke-width="1.300" fill="none"/><rect x="844.4" y="83.4" width="9" height="8.200" fill="none" stroke="#d9562b" stroke-width="1.300"/><rect x="844.4" y="95.4" width="9" height="8.200" fill="none" stroke="#d9562b" stroke-width="1.300"/><rect x="857" y="83.4" width="9" height="8.200" fill="none" stroke="#d9562b" stroke-width="1.300"/><rect x="857" y="95.4" width="9" height="8.200" fill="none" stroke="#d9562b" stroke-width="1.300"/>
<rect x="904.400" y="77.600" width="33" height="32.600" fill="#fafafa" stroke="none"/><path d="M904.400 80h33" stroke="#b0b0b0" stroke-width="3" stroke-linecap="butt"/><path d="M904.400 91.800h33 M904.400 101.200h33 M915.400 82v28 M926.400 82v28" stroke="#b5b5b5" stroke-width="1" stroke-linecap="butt"/><path d="M904.400 77.600h33 M904.400 82h33 M904.400 77.600v32.600 M937.400 77.600v32.600 M904.400 110.200h33" stroke="#3b3b3b" stroke-width="1.400" stroke-linecap="butt"/><circle cx="919.700" cy="90.200" r="10" fill="#fdfdfd" stroke="#3b3b3b" stroke-width="1.400"/><path d="M927 97.600l10.800 11.600" stroke="#3b3b3b" stroke-width="1.800"/><rect x="913.600" y="89.600" width="3.600" height="5.800" fill="#b8b8b8" stroke="#8a8a8a" stroke-width="0.600"/><rect x="918" y="84.600" width="3.200" height="10.800" fill="#f4f4f4" stroke="#555" stroke-width="0.800"/><rect x="922" y="86.800" width="3.600" height="8.600" fill="#2b88d8" stroke="none"/>
<path d="M101 194.600h6l-3 3.400z" fill="#777" stroke="none"/>
<path d="M159.200 191.400l11.400 10 M170.600 191.400l-11.400 10" stroke="#c2c2c2" stroke-width="1.500"/>
<path d="M197.600 197.400l4.400 4.600l8.400-10.400" stroke="#c6c6c6" stroke-width="2"/>
<path d="M1005.900 194.400l3.200 3.300l3.200-3.300" stroke="#6a6a6a" stroke-width="2"/>
<path d="M248.5 239V525M376.5 239V525M444.6 239V525M513.2 239V525M581.3 239V525M649.6 239V525M718 239V525M786.4 239V525M854.8 239V525M923.1 239V525M991.4 239V525M30 259.5H1001M30 280.5H1001M30 300.5H1001M30 321.5H1001M30 341.5H1001M30 362.5H1001M30 382.5H1001M30 402.5H1001M30 423.5H1001M30 443.5H1001M30 464.5H1001M30 484.5H1001M30 505.5H1001" stroke="#d4d4d4" stroke-width="1" stroke-linecap="butt"/>
<path d="M248.5 220V239M376.5 220V239M444.6 220V239M513.2 220V239M581.3 220V239M649.6 220V239M718 220V239M786.4 220V239M854.8 220V239M923.1 220V239M991.4 220V239" stroke="#c0c0c0" stroke-width="1" stroke-linecap="butt"/>
<path d="M2 259.5H29M2 280.5H29M2 300.5H29M2 321.5H29M2 341.5H29M2 362.5H29M2 382.5H29M2 402.5H29M2 423.5H29M2 443.5H29M2 464.5H29M2 484.5H29M2 505.5H29" stroke="#c0c0c0" stroke-width="1" stroke-linecap="butt" shape-rendering="crispEdges"/>
<path d="M2 239.500H1001 M29.500 220V525 M1001.5 239V525 M2 525.500H1001" stroke="#9e9e9e" stroke-width="1" stroke-linecap="butt" shape-rendering="crispEdges"/>
<path d="M26.800 223v12.800h-13.200z" fill="#b7b7b7" stroke="none"/>
<rect x="445" y="238" width="69" height="2" fill="#217346" stroke="none"/>
<rect x="28" y="280" width="2" height="21" fill="#217346" stroke="none"/>
<rect x="445.100" y="280.100" width="68.900" height="20.600" fill="#fff" stroke="#217346" stroke-width="2" stroke-linejoin="miter"/>
<rect x="510.600" y="298" width="5.400" height="5.400" fill="#217346" stroke="#fff" stroke-width="1" stroke-linejoin="miter"/>
<path d="M516.800 291l19.400-9.600l-4.600 6.400h38.400a3.400 3.400 0 0 1 0 6.800h-38.400l4.600 6.200z" fill="#f8584b" stroke="#f8584b" stroke-width="0.600"/>
<path d="M1008.600 231.200h7.800l-3.900-4.200z" fill="#222" stroke="none"/>
<path d="M1008.600 516.200h7.800l-3.900 4.200z" fill="#222" stroke="none"/>
<path d="M29.200 534.200v7.600l-4.600-3.800z" fill="#217346" stroke="none"/>
<path d="M49.600 534.200v7.600l4.400-3.800z" fill="#c2c2c2" stroke="none"/>
<rect x="700" y="525" width="57" height="1.500" fill="#fff" stroke="none"/>
<circle cx="794" cy="538" r="8.200" stroke="#6a6a6a" stroke-width="1.100"/><path d="M789.600 538h8.800 M794 533.600v8.800" stroke="#6a6a6a" stroke-width="1.200" stroke-linecap="butt"/>
<path d="M880.600 534.200v7.800l-4.200-3.900z" fill="#222" stroke="none"/>
<path d="M992 534.200v7.800l4.200-3.900z" fill="#222" stroke="none"/>
<path d="M67 567.800h-5.400v-11.800h13.600v4.200 M61.600 558.800h13.600" stroke="#4a4a4a" stroke-width="1.200" stroke-linecap="butt" stroke-linejoin="miter"/><path d="M63.400 560.800h3.400 M63.400 562.900h2.200 M63.400 565h2.200" stroke="#555" stroke-width="1" stroke-linecap="butt"/><circle cx="71.200" cy="564.600" r="4.300" stroke="#444" stroke-width="1.200" fill="#f3f3f3"/><circle cx="71.200" cy="564.600" r="2" fill="#3b3b3b" stroke="none"/>
<path d="M582.800 564.600h-5.200v-8.600h13.800v5.600" stroke="#4a4a4a" stroke-width="1.300" stroke-linecap="butt" stroke-linejoin="miter"/><path d="M591.60 564.40L589.71 565.85L589.40 568.21L587.20 567.30L585.00 568.21L584.69 565.85L582.80 564.40L584.69 562.95L585.00 560.59L587.20 561.50L589.40 560.59L589.71 562.95z" fill="#f3f3f3" stroke="#333" stroke-width="1.100" stroke-linejoin="round"/><circle cx="587.2" cy="564.4" r="1.300" fill="#333" stroke="none"/>
<path d="M708.400 555h13.200v13.200h-13.200z M712.800 555v13.200 M717.200 555v13.200 M708.400 559.400h13.200 M708.400 563.800h13.200" stroke="#444" stroke-width="1.100" stroke-linecap="butt"/>
<path d="M750.800 555h14.200v13.200h-14.200z" stroke="#444" stroke-width="1.200"/><path d="M754.200 558h7.400v7.400h-7.400z M756 559.900h3.800 M756 561.700h3.800 M756 563.500h3.800" stroke="#555" stroke-width="1" stroke-linecap="butt"/>
<path d="M793.400 555h14.200v13h-14.200z M797.400 555v7.400 M801.800 555v7.400h-8.400" stroke="#444" stroke-width="1.200" stroke-linecap="butt"/>
<path d="M827.600 562h8 M953.200 562h8.200 M957.300 557.900v8.200" stroke="#444" stroke-width="1.200" stroke-linecap="butt"/><path d="M841.200 562.200h106.800" stroke="#555" stroke-width="1" stroke-linecap="butt"/>
</svg>
</body></html>
